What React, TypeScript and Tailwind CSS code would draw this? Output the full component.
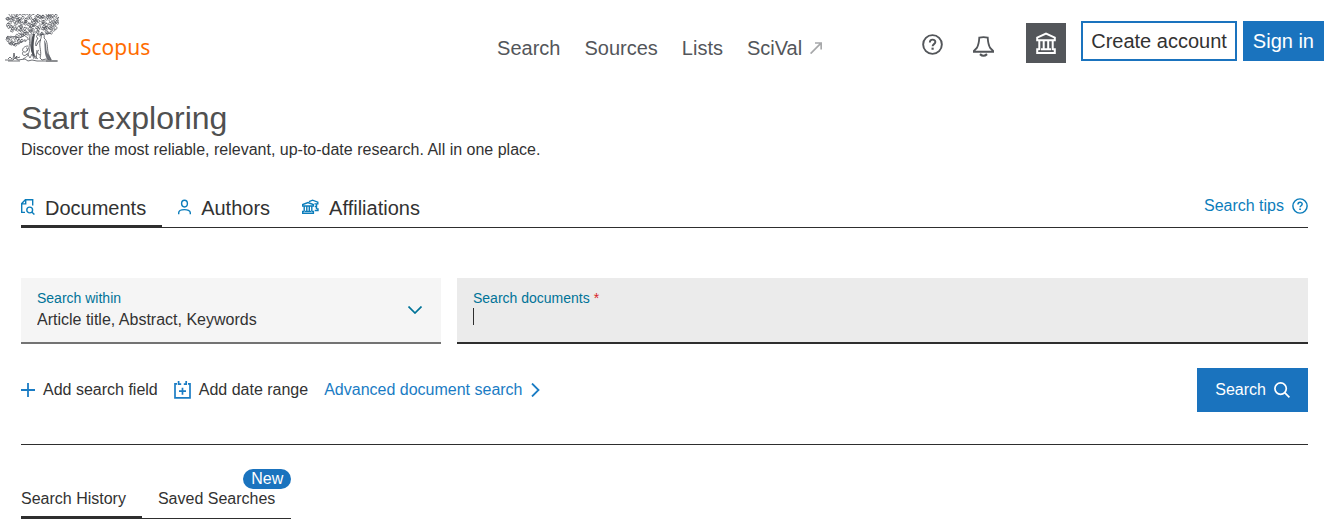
import React from "react";

interface IconProps {
  className?: string;
}

const CURLS = [
  "c0-2 3-2 3 0s-3 2-2 0",
  "c1 2 3 1 2-1s-3 0-2 2",
  "c-2-1-1-3 1-2s0 3-1 2",
  "c2-2 3 1 1 2s-2-2 0-3",
  "c-1 2 1 3 2 1s1-2 2 0",
];

// rows of foliage: [y, first x, last x]
const FOLIAGE: [number, number, number][] = [
  [1, 4, 50],
  [4, 1, 52],
  [7, 2, 51],
  [10, 1, 52],
  [13, 1, 51],
  [16, 6, 49],
  [19, 15, 46],
  [23, 2, 19],
  [26, 1, 20],
  [29, 4, 13],
];

const LEAVES = FOLIAGE.flatMap(([y, from, to], row) => {
  const leaves: string[] = [];
  let seed = 17 + row * 31;
  for (let x = from; x <= to; x += 3) {
    seed = (seed * 137 + 59) % 1009;
    leaves.push(`M${x + (seed % 2)} ${y + (seed % 3) - 1}${CURLS[seed % 5]}`);
  }
  return leaves;
}).join("");

const TreeLogo: React.FC<IconProps> = ({ className }) => (
  <svg viewBox="0 0 54 48" fill="none" stroke="#4b4e54" className={className} aria-hidden="true">
    <path d={LEAVES} strokeWidth="0.7" />
    <path
      strokeWidth="0.7"
      d="M1 24q5-3 9-1t9-1M3 29q6 3 11 0t7-2M13 19q6 1 10 5M46 19q-6 2-14 1"
    />
    {/* trunk */}
    <path
      strokeWidth="0.7"
      d="M24 20c1 7 1 13-2 17M26 20c0 7 0 12-2 18s-3 5-6 7M29 20c-2 6-2 11-1 16s2 7 5 9M22 39l3 5 2-4 2 5"
    />
    <path fill="#4b4e54" stroke="none" d="M28 20c-2 5-2 12-2 17l2 5 3 3c-3-5-3-14-1-25z" />
    <path strokeWidth="0.8" d="M23 32c-5 0-7 5-4 6s5-4 2-4M18 38c-2 3 2 5 4 2" />
    {/* robed figures */}
    <path fill="#6d7077" stroke="none" d="M39 26c3 3 2 9 3 12s4 5 4 8l-4-1c-3-5-2-12-3-19z" />
    <path
      strokeWidth="0.8"
      d="M36 21c2-2 4 0 3 3 4 3 3 9 4 14s4 8 3 8l-5-1-4 1-2-2c2-6-1-11 0-16 0-3 2-4 1-7zM33 21c-2 0-2 3 0 3-2 3-3 6-2 8l3-5 2-1M34 36c-2 1-2 4 1 5M32 36c0 3-1 6-1 9"
    />
    {/* ground */}
    <path
      strokeWidth="0.8"
      d="M0 46h8l2-2 3 2 7-1 3 2 4-1 5 1h21M3 47h12M8 45l1-6 1 5 2-2-1 3M3 45l2-2 2 2M12 44l3-1M41 47h11"
    />
  </svg>
);

const HelpIcon: React.FC<IconProps> = ({ className }) => (
  <svg viewBox="0 0 22 22" fill="none" stroke="currentColor" strokeWidth="2" className={className} aria-hidden="true">
    <circle cx="11" cy="11" r="9.8" />
    <path d="M8.200 9c0-4 5.800-4 5.800-.6 0 2.200-2.900 2.200-2.900 4.400" />
    <path d="M11.100 14.300v2.200" strokeWidth="2.300" />
  </svg>
);

const BellIcon: React.FC<IconProps> = ({ className }) => (
  <svg viewBox="0 0 22 22" fill="none" stroke="currentColor" strokeWidth="1.900" className={className} aria-hidden="true">
    <path d="M6.600 1.600q4.400-1 8.800 0 .4 7.400 2.600 10.900l3.200 3.300v.7H.8v-.7L4 12.500Q6.200 9 6.600 1.600z" />
    <path d="M7.300 19q3.700 3.400 7.400 0" strokeWidth="2.200" />
  </svg>
);

const InstitutionIcon: React.FC<IconProps> = ({ className }) => (
  <svg viewBox="0 0 20 22" fill="none" stroke="currentColor" strokeWidth="2" className={className} aria-hidden="true">
    <path d="M1.200 8.200V5.600L10 1.500l8.800 4.100v2.600zM3.300 8.500V18M7.700 8.500v9M12.200 8.500v9M16.700 8.500V18M5 17.200h10M3.500 17.200H1.200V21h17.600v-3.800h-2.300" />
  </svg>
);

const DocumentSearchIcon: React.FC<IconProps> = ({ className }) => (
  <svg viewBox="0 0 14 16" fill="none" stroke="currentColor" strokeWidth="1.400" className={className} aria-hidden="true">
    <path d="M4 13.400H.7V4.600L4.400.8h7.300v5.600M4.700 1v3.900H1" />
    <circle cx="8.700" cy="11" r="2.900" />
    <path d="m10.800 13.100 2.600 2.500" />
  </svg>
);

const PersonIcon: React.FC<IconProps> = ({ className }) => (
  <svg viewBox="0 0 13 16" fill="none" stroke="currentColor" strokeWidth="1.400" className={className} aria-hidden="true">
    <ellipse cx="6.500" cy="4.600" rx="2.900" ry="3.400" />
    <path d="M.7 15.200v-1.400c0-4.200 11.600-4.200 11.600 0v1.400" />
  </svg>
);

const AffiliationIcon: React.FC<IconProps> = ({ className }) => (
  <svg viewBox="0 0 17 16" fill="none" stroke="currentColor" strokeWidth="1.400" className={className} aria-hidden="true">
    <path d="M.7 7V5.500l5.300-2 5.300 2V7zM2.200 7v5.800M4.800 7v5.500M7.300 7v5.500M9.800 7v5.800M2 12.400H.7v1.900h10.700v-1.900H10M3 12.400h6" />
    <path d="M7 2.700 10.600 1.200l5.200 2v1.700h-3.400M14.500 5v5M12.700 7.500h2M12.700 11.500h3.300v-1.600h-1.400" />
  </svg>
);

const CalendarPlusIcon: React.FC<IconProps> = ({ className }) => (
  <svg viewBox="0 0 17 18" fill="none" stroke="currentColor" strokeWidth="1.700" className={className} aria-hidden="true">
    <path d="M3 2.800H1v14.100h15V2.800h-2M4.600 0v4M12.200 0v4M4.600 3.200h2.600M9.800 3.200h2.400M8.500 6.700v7M5 10.200h7" />
  </svg>
);

const SearchIcon: React.FC<IconProps> = ({ className }) => (
  <svg viewBox="0 0 16 16" fill="none" stroke="currentColor" strokeWidth="1.700" className={className} aria-hidden="true">
    <circle cx="6.600" cy="6.600" r="5.700" />
    <path d="m10.700 10.700 4.700 4.700" />
  </svg>
);

const Header: React.FC = () => (
  <header className="flex items-start pl-[5px] pr-[7px] pt-3.5 h-[98px]">
    <a href="#" className="flex items-start gap-[21px] text-[#ff6c00]">
      <TreeLogo className="w-[54px] h-12" />
      <span className="pt-[19px] font-['Noto_Sans',sans-serif] text-[21px] leading-7">Scopus</span>
    </a>
    <nav className="ml-auto pt-[22px] flex gap-6 text-xl leading-6 text-[#53565a]">
      <a href="#">Search</a>
      <a href="#">Sources</a>
      <a href="#">Lists</a>
      <a href="#" className="flex items-center gap-2">
        SciVal
        <svg viewBox="0 0 12 12" fill="none" stroke="#a7a8aa" strokeWidth="1.700" className="size-3" aria-hidden="true">
          <path d="M.6 11.600 11 1.200M5 1h6.200v6.500" />
        </svg>
      </a>
    </nav>
    <div className="ml-[100px] flex items-start text-[#53565a]">
      <button aria-label="Help" className="mt-5">
        <HelpIcon className="block size-[21px]" />
      </button>
      <button aria-label="Notifications" className="ml-[30px] mt-[22px]">
        <BellIcon className="block size-[21px]" />
      </button>
      <button
        aria-label="Institution"
        className="ml-8 mt-[9px] flex size-10 items-center justify-center bg-[#53565a] text-white">
        <InstitutionIcon className="w-5 h-[22px]" />
      </button>
      <button className="ml-[15px] mt-[7px] h-10 border-2 border-[#1a73be] px-2 text-xl leading-6 text-[#323232]">
        Create account
      </button>
      <button className="ml-1.5 mt-[7px] h-10 bg-[#1a73be] px-2.5 text-xl leading-6 text-white">
        Sign in
      </button>
    </div>
  </header>
);

const SearchTabs: React.FC = () => (
  <div className="mt-8 flex items-start justify-between border-b border-[#2e2e2e]">
    <div role="tablist" className="mt-0.5 -mb-px flex gap-4 text-xl leading-6">
      <button
        role="tab"
        aria-selected="true"
        className="flex items-start gap-2.5 border-b-3 border-[#2e2e2e] pr-4 pb-[5px]">
        <DocumentSearchIcon className="mt-[3px] w-3.5 h-4 text-[#0c7dbb]" />
        Documents
      </button>
      <button role="tab" aria-selected="false" className="flex items-start gap-2.5 pr-4">
        <PersonIcon className="mt-[3px] w-[13px] h-4 text-[#0c7dbb]" />
        Authors
      </button>
      <button role="tab" aria-selected="false" className="flex items-start gap-2.5">
        <AffiliationIcon className="mt-[3px] w-[17px] h-4 text-[#0c7dbb]" />
        Affiliations
      </button>
    </div>
    <a href="#" className="flex items-center gap-2 text-[#0c7dbb]">
      Search tips
      <HelpIcon className="size-4" />
    </a>
  </div>
);

const SearchForm: React.FC = () => (
  <form onSubmit={(e) => e.preventDefault()} className="mt-[50px]">
    <div className="flex gap-4">
      <div className="relative w-[420px] shrink-0 border-b-2 border-[#737373] bg-[#f5f5f5] px-4 py-2.5">
        <label htmlFor="within" className="block text-sm leading-5 text-[#007398]">
          Search within
        </label>
        <select id="within" className="block h-6 w-full appearance-none bg-transparent leading-6 outline-none">
          <option>Article title, Abstract, Keywords</option>
        </select>
        <svg
          viewBox="0 0 14 8"
          fill="none"
          stroke="#007398"
          strokeWidth="1.700"
          className="pointer-events-none absolute right-[19px] top-7 h-2 w-3.5"
          aria-hidden="true">
          <path d="m.5.5 6.500 6.500L13.500.5" />
        </svg>
      </div>
      <div className="flex-1 border-b-2 border-[#2e2e2e] bg-[#ebebeb] px-4 py-2.5">
        <label htmlFor="query" className="block text-sm leading-5 text-[#007398]">
          Search documents <span className="text-[#d9232a]">*</span>
        </label>
        <div className="flex h-6 items-start">
          <span className="h-[17px] w-px bg-[#2e2e2e]" />
          <input id="query" type="text" className="h-6 flex-1 bg-transparent caret-transparent outline-none" />
        </div>
      </div>
    </div>
    <div className="mt-6 flex items-center gap-4">
      <button type="button" className="flex items-center gap-2">
        <svg viewBox="0 0 14 14" stroke="#1a7cc4" strokeWidth="1.800" className="size-3.5" aria-hidden="true">
          <path d="M7 0v14M0 7h14" />
        </svg>
        Add search field
      </button>
      <button type="button" className="flex items-center gap-2">
        <CalendarPlusIcon className="w-[17px] h-[18px] text-[#1a7cc4]" />
        Add date range
      </button>
      <a href="#" className="flex items-center gap-2 text-[#1a7cc4]">
        Advanced document search
        <svg viewBox="0 0 9 14" fill="none" stroke="currentColor" strokeWidth="1.800" className="h-3.5 w-[9px]" aria-hidden="true">
          <path d="m1 .5 6.500 6.500L1 13.500" />
        </svg>
      </a>
      <button type="submit" className="ml-auto flex h-11 items-center gap-2 bg-[#1a73be] px-[18px] text-white">
        Search
        <SearchIcon className="size-4" />
      </button>
    </div>
  </form>
);

const HistoryTabs: React.FC = () => (
  <div role="tablist" className="mt-[42px] flex w-fit gap-4 border-b border-[#2e2e2e]">
    <button role="tab" aria-selected="true" className="-mb-px border-b-3 border-[#2e2e2e] pr-4 pb-[5px]">
      Search History
    </button>
    <button role="tab" aria-selected="false" className="relative pr-4 pb-[7px]">
      Saved Searches
      <span className="absolute right-0 -top-[18px] rounded-full bg-[#1a73be] px-2 leading-5 text-white">New</span>
    </button>
  </div>
);

const App: React.FC = () => {
  return (
    <div className="bg-white font-['Liberation_Sans',Arial,sans-serif] text-base leading-6 text-[#323232]">
      <Header />
      <main className="pl-[21px] pr-[23px]">
        <h1 className="text-[32px] leading-10 text-[#505050]">Start exploring</h1>
        <p>Discover the most reliable, relevant, up-to-date research. All in one place.</p>
        <SearchTabs />
        <SearchForm />
        <hr className="mt-8 border-[#2e2e2e]" />
        <HistoryTabs />
      </main>
    </div>
  );
};

export default App;
